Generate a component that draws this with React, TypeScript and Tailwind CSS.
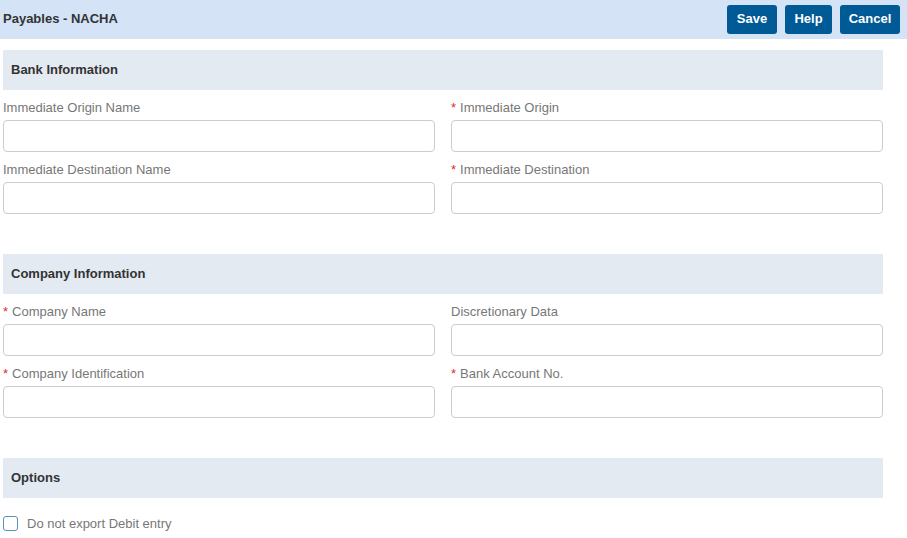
import React, { useState } from "react";

const Field: React.FC<{ label: string; required?: boolean }> = ({ label, required }) => (
  <div className="flex flex-col">
    <label className="h-[30px] flex items-center pt-[6px] text-[13px] text-[#777]">
      {required && <span className="text-[#e0301e] mr-[4px]">*</span>}
      {label}
    </label>
    <input
      type="text"
      className="h-[32px] w-full rounded-[4px] border border-[#cccccc] bg-white px-2 text-[13px] outline-none"
    />
  </div>
);

const Section: React.FC<{ title: string; children: React.ReactNode }> = ({ title, children }) => (
  <div>
    <div className="h-[40px] w-[880px] bg-[#e3eaf2] flex items-center pl-[8px] pb-[1px] text-[13px] font-bold text-[#333]">
      {title}
    </div>
    {children}
  </div>
);

const App: React.FC = () => {
  const [noDebit, setNoDebit] = useState(false);

  return (
    <div className="w-[907px] h-[538px] bg-white overflow-hidden font-['Liberation_Sans',Arial,sans-serif]">
      <div className="h-[39px] bg-[#d4e3f6] flex items-center justify-between pl-[3px] pr-[7px]">
        <h1 className="text-[13px] font-bold text-[#333] -mt-[1px]">Payables - NACHA</h1>
        <div className="flex gap-[8px] -mt-[1px]">
          <button className="h-[29px] w-[50px] rounded-[3px] bg-[#005a96] text-white text-[13px] font-bold">Save</button>
          <button className="h-[29px] w-[47px] rounded-[3px] bg-[#005a96] text-white text-[13px] font-bold">Help</button>
          <button className="h-[29px] w-[60px] rounded-[3px] bg-[#005a96] text-white text-[13px] font-bold">Cancel</button>
        </div>
      </div>

      <div className="pl-[3px] pt-[11px]">
        <Section title="Bank Information">
          <div className="grid grid-cols-2 gap-x-[16px] w-[880px]">
            <Field label="Immediate Origin Name" />
            <Field label="Immediate Origin" required />
            <Field label="Immediate Destination Name" />
            <Field label="Immediate Destination" required />
          </div>
        </Section>

        <div className="h-[40px]" />

        <Section title="Company Information">
          <div className="grid grid-cols-2 gap-x-[16px] w-[880px]">
            <Field label="Company Name" required />
            <Field label="Discretionary Data" />
            <Field label="Company Identification" required />
            <Field label="Bank Account No." required />
          </div>
        </Section>

        <div className="h-[40px]" />

        <Section title="Options">
          <label className="flex items-center gap-[9px] mt-[16px] text-[13px] text-[#777]">
            <input
              type="checkbox"
              checked={noDebit}
              onChange={(e) => setNoDebit(e.target.checked)}
              className="appearance-none w-[15px] h-[15px] rounded-[3px] border border-[#5a8fc8] bg-white checked:bg-[#005a96]"
            />
            Do not export Debit entry
          </label>
        </Section>
      </div>
    </div>
  );
};

export default App;
